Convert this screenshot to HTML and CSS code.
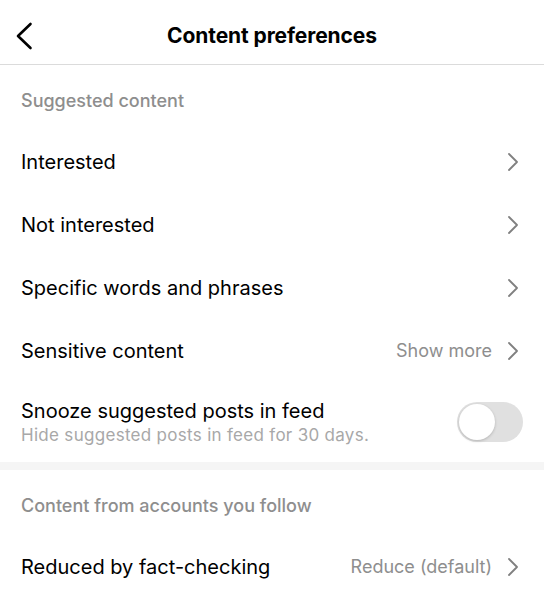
FILE: index.html
```html
<!DOCTYPE html>
<html lang="en">
<head>
    <meta charset="UTF-8">
    <meta name="viewport" content="width=device-width, initial-scale=1.0">
    <title>Content preferences</title>
    <link rel="stylesheet" href="styles.css">
</head>
<body>
    <div class="header">
        <svg class="back" width="18" height="28" viewBox="0 0 18 28">
            <polyline points="15.5,2 3,14 15.5,26" fill="none" stroke="#000" stroke-width="2.6" stroke-linecap="round" stroke-linejoin="round"/>
        </svg>
        <h1>Content preferences</h1>
    </div>

    <div class="section-title">Suggested content</div>

    <div class="row">
        <span class="label">Interested</span>
        <svg class="chev" width="12" height="20" viewBox="0 0 12 20"><polyline points="2,2 10,10 2,18" fill="none" stroke="#808080" stroke-width="1.8" stroke-linecap="round" stroke-linejoin="round"/></svg>
    </div>
    <div class="row">
        <span class="label">Not interested</span>
        <svg class="chev" width="12" height="20" viewBox="0 0 12 20"><polyline points="2,2 10,10 2,18" fill="none" stroke="#808080" stroke-width="1.8" stroke-linecap="round" stroke-linejoin="round"/></svg>
    </div>
    <div class="row">
        <span class="label">Specific words and phrases</span>
        <svg class="chev" width="12" height="20" viewBox="0 0 12 20"><polyline points="2,2 10,10 2,18" fill="none" stroke="#808080" stroke-width="1.8" stroke-linecap="round" stroke-linejoin="round"/></svg>
    </div>
    <div class="row">
        <span class="label">Sensitive content</span>
        <span class="value">Show more</span>
        <svg class="chev" width="12" height="20" viewBox="0 0 12 20"><polyline points="2,2 10,10 2,18" fill="none" stroke="#808080" stroke-width="1.8" stroke-linecap="round" stroke-linejoin="round"/></svg>
    </div>
    <div class="row tall">
        <div class="text">
            <div class="label">Snooze suggested posts in feed</div>
            <div class="sub">Hide suggested posts in feed for 30 days.</div>
        </div>
        <div class="toggle"><div class="knob"></div></div>
    </div>

    <div class="divider"></div>

    <div class="section-title">Content from accounts you follow</div>

    <div class="row">
        <span class="label">Reduced by fact-checking</span>
        <span class="value">Reduce (default)</span>
        <svg class="chev" width="12" height="20" viewBox="0 0 12 20"><polyline points="2,2 10,10 2,18" fill="none" stroke="#808080" stroke-width="1.8" stroke-linecap="round" stroke-linejoin="round"/></svg>
    </div>
</body>
</html>
```

FILE: styles.css
```css
* {
    margin: 0;
    padding: 0;
    box-sizing: border-box;
}

body {
    font-family: 'Inter', 'Roboto', sans-serif;
    background: #fff;
    color: #000;
    width: 544px;
    overflow: hidden;
}

.header {
    height: 65px;
    padding-top: 7px;
    border-bottom: 1px solid #dbdbdb;
    display: flex;
    align-items: center;
    justify-content: center;
    position: relative;
}

.header h1 {
    font-size: 21px;
    font-weight: 700;
    letter-spacing: -0.1px;
}

.back {
    position: absolute;
    left: 15px;
    top: 22px;
}

.section-title {
    height: 65px;
    padding: 25px 21px 0;
    font-size: 18px;
    font-weight: 500;
    color: #8e8e8e;
}

.row {
    height: 63px;
    display: flex;
    align-items: center;
    padding: 0 21px;
}

.row.tall {
    height: 80px;
}

.label {
    font-size: 20px;
    flex: 1;
}

.text {
    flex: 1;
}

.sub {
    font-size: 17px;
    letter-spacing: 0.3px;
    color: #a8a8a8;
    margin-top: 2px;
}

.value {
    font-size: 18px;
    color: #8e8e8e;
    margin-right: 15px;
}

.chev {
    margin-right: 4px;
}

.toggle {
    width: 66px;
    height: 40px;
    border-radius: 20px;
    background: #e0e0e0;
    padding: 2px;
    margin-right: 0;
}

.knob {
    width: 36px;
    height: 36px;
    border-radius: 50%;
    background: #fff;
    box-shadow: 0 1px 3px rgba(0,0,0,0.2);
}

.divider {
    height: 8px;
    background: #f5f5f5;
}
```
